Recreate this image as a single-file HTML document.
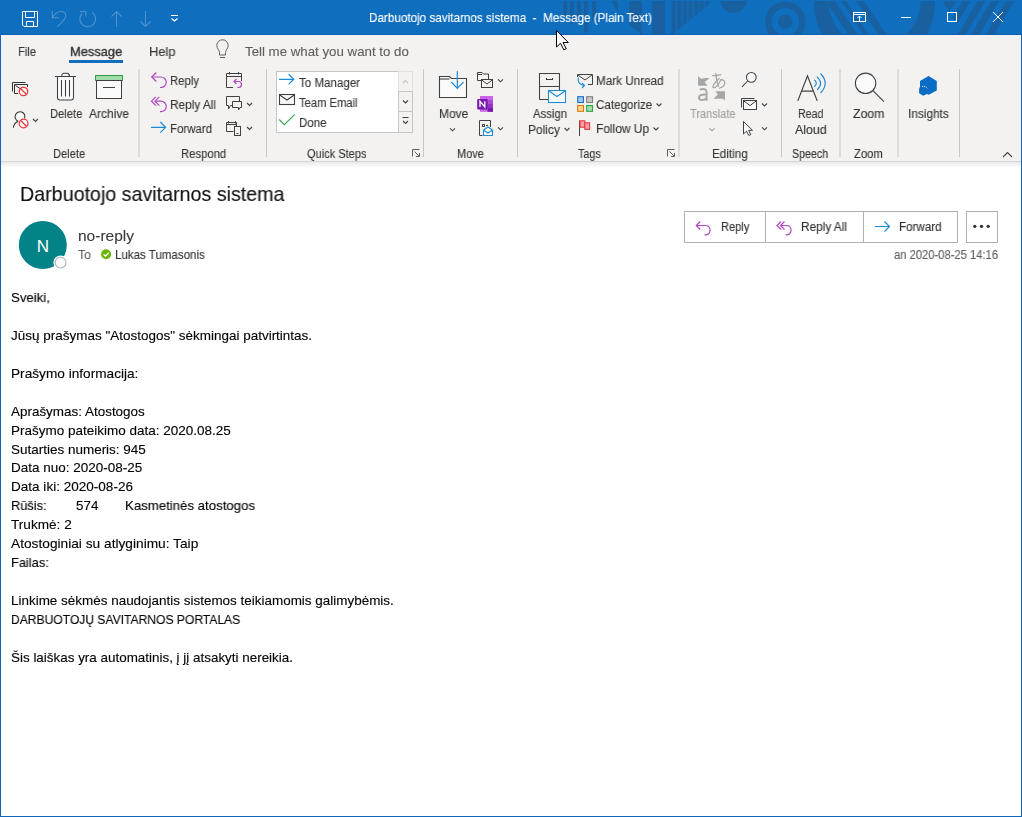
<!DOCTYPE html>
<html><head><meta charset="utf-8"><style>
html,body{margin:0;padding:0;}
body{width:1022px;height:817px;position:relative;overflow:hidden;background:#fff;font-family:"Liberation Sans",sans-serif;}
.t{position:absolute;white-space:pre;line-height:1;transform-origin:0 0;will-change:transform;-webkit-text-stroke:0.12px currentColor;}
#title{position:absolute;left:0;top:0;width:1022px;height:35px;background:#106ebe;}
#ribbon{position:absolute;left:0;top:35px;width:1022px;height:126px;background:#f3f2f1;border-bottom:1px solid #d6d4d2;}
#shadow{position:absolute;left:1px;top:162px;width:1020px;height:6px;background:linear-gradient(#ebeaea,#fff);}
#bl{position:absolute;left:0;top:35px;width:1px;height:782px;background:#0f66bb;}
#br{position:absolute;left:1021px;top:35px;width:1px;height:782px;background:#0f66bb;}
#bb{position:absolute;left:0;top:816px;width:1022px;height:1px;background:#0f66bb;}
</style></head><body>
<div id="title"></div>
<div id="ribbon"></div>
<div id="shadow"></div>
<svg style="position:absolute;left:0;top:0" width="1022" height="817" viewBox="0 0 1022 817">
<defs>
<clipPath id="tb"><rect x="0" y="1" width="1022" height="33"/></clipPath>
<clipPath id="bigc"><circle cx="874.5" cy="0.9" r="46.2"/></clipPath>
<clipPath id="rs"><polygon points="940,1 1022,1 1022,34 955,34 958,24 944,4"/></clipPath>
<clipPath id="tri"><polygon points="671,1 713,1 672,35 671,35"/></clipPath>
<pattern id="vs" width="5.6" height="40" patternUnits="userSpaceOnUse" x="671.5" y="0"><rect x="0" y="0" width="4.4" height="40" fill="#1860a0"/></pattern>
</defs>
<!-- title pattern -->
<g clip-path="url(#tb)" fill="#1860a0">
 <rect x="563" y="1" width="4" height="15.5"/>
 <rect x="570" y="1" width="4" height="22.5"/>
 <rect x="577" y="1" width="4" height="17.5"/>
 <rect x="584" y="1" width="4" height="31.5"/>
 <rect x="592" y="1" width="4" height="19"/>
 <polygon points="611.5,1 618,1 618,12.3"/>
 <polygon points="629,1 642,1 642,34 629,25"/>
 <rect x="652" y="1" width="13" height="33"/>
 <g clip-path="url(#tri)"><rect x="671" y="0" width="45" height="36" fill="url(#vs)"/></g>
 <circle cx="733.5" cy="-0.5" r="13.5"/>
 <path d="M785.3,21.7 m-20.3,0 a20.3,20.3 0 1,0 40.6,0 a20.3,20.3 0 1,0 -40.6,0 Z M785.3,21.7 m-13.7,0 a13.7,13.7 0 1,1 27.4,0 a13.7,13.7 0 1,1 -27.4,0 Z" fill-rule="evenodd"/>
 <circle cx="785.3" cy="21.7" r="7.3"/>
 <path d="M814,3.5 a60.5,60.5 0 1,0 121,0 a60.5,60.5 0 1,0 -121,0 Z M828.3,0.9 a46.2,46.2 0 1,1 92.4,0 a46.2,46.2 0 1,1 -92.4,0 Z" fill-rule="evenodd"/>
 <g clip-path="url(#bigc)">
   <polygon points="826,1 835,1 859,37 850,37"/>
   <polygon points="841.4,1 846,1 870,37 865.4,37"/>
   <polygon points="856,1 864,1 888,37 880,37"/>
 </g>
 <g clip-path="url(#rs)">
  <polygon points="945,1 956,1 932,41 921,41"/>
  <polygon points="962.5,1 970.5,1 947,41 939,41"/>
  <polygon points="977.5,1 985.5,1 962,41 954,41"/>
  <polygon points="991,1 999,1 975.5,41 967.5,41"/>
  <polygon points="1006,1 1014,1 990.5,41 982.5,41"/>
 </g>
</g>
<rect x="0" y="34" width="1022" height="1" fill="#0c5fb0"/>
<!-- quick access -->
<g fill="none" stroke="#fff" stroke-width="1">
 <path d="M22.5,11.5 H37.5 V26.5 H24 L22.5,25 Z"/>
 <path d="M25.5,11.5 V17.5 H34.5 V11.5"/>
 <path d="M26.5,26.5 V21.5 H33.5 V26.5"/>
</g>
<g fill="none" stroke="rgba(255,255,255,0.25)" stroke-width="1.1">
 <path d="M52.5,17.5 C55,13.5 58,11.5 61,11.5 C64,11.5 65.8,13.5 65.8,16 C65.8,18.5 63,21.5 57.3,26.7"/>
 <path d="M52.3,11 V17.8 H59"/>
 <path d="M82,13.5 A7.9,7.9 0 1 0 92.3,12.5"/>
 <path d="M80,11.5 H85.8 V16.8"/>
 <path d="M116.5,11 V27 M111.5,16.5 L116.5,11.5 L121.5,16.5"/>
 <path d="M145.5,11 V27 M140.5,21.5 L145.5,26.5 L150.5,21.5"/>
</g>
<g fill="none" stroke="#fff" stroke-width="1">
 <path d="M171,15.5 H178"/>
 <path d="M171.5,18.5 L174.5,21 L177.5,18.5" stroke-width="1.3"/>
</g>
<!-- window controls -->
<g fill="none" stroke="#fff" stroke-width="1">
 <rect x="853.5" y="12.5" width="12" height="9"/>
 <path d="M853.5,14.5 H865.5 M859.5,16 V21.5 M857.5,18 L859.5,16 L861.5,18"/>
 <path d="M901,17.5 H911"/>
 <rect x="947.5" y="12.5" width="9" height="9"/>
 <path d="M993,12 L1003,22 M1003,12 L993,22"/>
</g>

<!-- ribbon tab underline -->
<rect x="69" y="60" width="54" height="3" fill="#106ebe"/>
<!-- lightbulb -->
<g fill="none" stroke="#605e5c" stroke-width="1">
 <path d="M219.5,55 V52.5 C219.5,50 216.8,48.5 216.8,45.5 A5.7,5.7 0 0 1 228.2,45.5 C228.2,48.5 225.5,50 225.5,52.5 V55 Z"/>
 <path d="M220,57.5 H225"/>
</g>
<!-- separators -->
<g fill="#c8c6c4">
 <rect x="138.5" y="69" width="1" height="88"/>
 <rect x="266" y="69" width="1" height="88"/>
 <rect x="423" y="69" width="1" height="88"/>
 <rect x="517" y="69" width="1" height="88"/>
 <rect x="678.5" y="69" width="1" height="88"/>
 <rect x="781" y="69" width="1" height="88"/>
 <rect x="839.5" y="69" width="1" height="88"/>
 <rect x="897.5" y="69" width="1" height="88"/>
 <rect x="959" y="69" width="1" height="88"/>
</g>
<!-- chevrons -->
<g fill="none" stroke="#444" stroke-width="1.1">
 <path d="M33,119 L35.5,121.5 L38,119"/>
 <path d="M247,103 L249.5,105.5 L252,103"/>
 <path d="M247,127 L249.5,129.5 L252,127"/>
 <path d="M450,128.3 L452.5,130.8 L455,128.3"/>
 <path d="M498,79.3 L500.5,81.8 L503,79.3"/>
 <path d="M498,127.3 L500.5,129.8 L503,127.3"/>
 <path d="M564.5,128 L567,130.5 L569.5,128"/>
 <path d="M656.5,103.5 L659,106 L661.5,103.5"/>
 <path d="M653.5,127.5 L656,130 L658.5,127.5"/>
 <path d="M762,103.5 L764.5,106 L767,103.5"/>
 <path d="M762,127.3 L764.5,129.8 L767,127.3"/>
 <path d="M1003,157 L1007.5,152.5 L1012,157"/>
</g>
<path d="M709.5,128.3 L712,130.8 L714.5,128.3" fill="none" stroke="#a19f9d" stroke-width="1.1"/>
<!-- Ignore icon -->
<g fill="none" stroke="#323130" stroke-width="1">
 <path d="M12.5,91.5 V82.5 H25.5"/>
 <path d="M18,93.5 H14.5 V84.5 H27.5 V87"/>
 <path d="M15.5,85.5 L20,88.5"/>
</g>
<g>
 <circle cx="23.5" cy="91.5" r="4.2" fill="#fff" stroke="#e8383d" stroke-width="1.3"/>
 <path d="M20.7,88.7 L26.3,94.3" stroke="#e8383d" stroke-width="1.3"/>
</g>
<!-- Junk icon -->
<g fill="none" stroke="#323130" stroke-width="1.05">
 <path d="M18.2,121.2 A4.9,4.9 0 1 1 24.6,118.3" fill="#fafafa"/>
 <path d="M13.3,127.6 C13.8,124.5 15.5,122.3 18.2,121.2"/>
</g>
<g>
 <circle cx="23.6" cy="123.5" r="4.4" fill="#fff" stroke="#e8383d" stroke-width="1.25"/>
 <path d="M20.6,120.5 L26.6,126.5" stroke="#e8383d" stroke-width="1.25"/>
</g>
<!-- Trash -->
<g fill="none" stroke="#404040" stroke-width="1.05">
 <path d="M57.5,76.5 V97.5 A2.5,2.5 0 0 0 60,100 H71 A2.5,2.5 0 0 0 73.5,97.5 V76.5" fill="#fafafa"/>
 <path d="M55,76.5 H76"/>
 <path d="M61.8,76.5 C61.8,73.5 62.5,73.3 64,73.3 H67 C68.5,73.3 69.5,73.5 69.5,76.5"/>
 <path d="M61.5,80 V96.5 M65.5,80 V96.5 M69.5,80 V96.5"/>
</g>
<!-- Archive -->
<rect x="95.5" y="75.5" width="27" height="5" fill="#a3dba8" stroke="#2e9e48" stroke-width="1"/>
<rect x="96.5" y="80.5" width="25" height="18" fill="#fafafa" stroke="#404040" stroke-width="1"/>
<path d="M103,87.5 H115" stroke="#404040" stroke-width="1"/>
<!-- Reply / reply all / forward -->
<g fill="none" stroke="#b146c2" stroke-width="1.2">
 <path d="M151.5,77 H161 A5.2,5.2 0 0 1 161,87.5 H160"/>
 <path d="M156.3,72.5 L151.8,77 L156.3,81.5"/>
 <path d="M155.5,101.2 H161 A5.2,5.2 0 0 1 161,111.7 H160"/>
 <path d="M155.8,96.8 L151.5,101.2 L155.8,105.6"/>
 <path d="M159.3,96.8 L155,101.2 L159.3,105.6"/>
</g>
<g fill="none" stroke="#1e8bd6" stroke-width="1.2">
 <path d="M151,127.3 H165.5 M160.3,122 L165.6,127.3 L160.3,132.6"/>
</g>
<!-- meeting reply -->
<g fill="none" stroke="#404040" stroke-width="1">
 <path d="M233,87.5 H226.5 V73.5 H241.5 V81"/>
 <path d="M226.5,76.5 H241.5"/>
 <path d="M229.5,72 V74.5 M238.5,72 V74.5"/>
</g>
<g fill="none" stroke="#b146c2" stroke-width="1.2">
 <path d="M234,81.5 H238.5 A3,3 0 0 1 238.5,87.5 H237.5"/>
 <path d="M236.5,79 L234,81.5 L236.5,84"/>
</g>
<!-- IM -->
<g fill="none" stroke="#404040" stroke-width="1">
 <path d="M232.5,105.5 H230.5 L228.5,109 V105.5 H226.5 V96.5 H239.5 V101"/>
 <path d="M232.5,101.5 H241.5 V107.5 H240 L238.5,110 V107.5 H232.5 Z" fill="#f3f2f1"/>
</g>
<!-- calendar + phone -->
<g fill="none" stroke="#404040" stroke-width="1">
 <path d="M233.5,131.5 H226.5 V122.5 H236.5 V126"/>
 <path d="M226.5,124.5 H236.5"/>
 <path d="M228.5,121 V123.5 M235.5,121 V123.5"/>
 <rect x="234.5" y="126.5" width="6" height="9" fill="#f3f2f1"/>
 <path d="M236.5,133.5 H238.5"/>
</g>
<!-- Quick steps box -->
<rect x="276.5" y="71.5" width="136" height="61" fill="#fff" stroke="#c8c6c4" stroke-width="1"/>
<rect x="398.5" y="71.5" width="14" height="20" fill="#f3f2f1" stroke="#e1dfdd" stroke-width="1"/>
<rect x="398.5" y="91.5" width="14" height="20" fill="#f3f2f1" stroke="#c8c6c4" stroke-width="1"/>
<rect x="398.5" y="111.5" width="14" height="21" fill="#f3f2f1" stroke="#c8c6c4" stroke-width="1"/>
<path d="M403,83 L405.5,80.5 L408,83" fill="none" stroke="#c8c6c4" stroke-width="1.1"/>
<path d="M403,100.5 L405.5,103 L408,100.5" fill="none" stroke="#404040" stroke-width="1.1"/>
<path d="M402.5,117.5 H408.5 M403,121 L405.5,123.5 L408,121" fill="none" stroke="#404040" stroke-width="1.1"/>
<g fill="none" stroke="#1e8bd6" stroke-width="1.2">
 <path d="M279,79.3 H294 M288.6,74.2 L293.8,79.3 L288.6,84.4"/>
</g>
<g fill="none" stroke="#404040" stroke-width="1.1">
 <rect x="279.5" y="94.5" width="15" height="10" fill="#f8f8f8"/>
 <path d="M279.8,95 L287,100 L294.2,95"/>
</g>
<path d="M279.2,119.5 L284.4,124.7 L294.7,114.3" fill="none" stroke="#3aa851" stroke-width="1.2"/>
<!-- launchers -->
<g fill="none" stroke="#605e5c" stroke-width="1">
 <path d="M412.5,156.5 V149.5 H419.5 M414.5,151.5 L419,156 M419.5,153 V156.5 H416"/>
 <path d="M667.5,156.5 V149.5 H674.5 M669.5,151.5 L674,156 M674.5,153 V156.5 H671"/>
</g>
<!-- Move folder -->
<g fill="none" stroke="#404040" stroke-width="1.1">
 <path d="M439.5,97.5 V76.5 H449.5 L451.5,78.5 H466.5 V97.5 Z" fill="#fafafa"/>
 <path d="M439.5,79 H449.5"/>
</g>
<g fill="none" stroke="#1e8bd6" stroke-width="1.2">
 <path d="M457.3,71 V88.5 M451.3,82 L457.3,88.3 L463.5,82"/>
</g>
<!-- rules -->
<g fill="none" stroke="#404040" stroke-width="1">
 <path d="M481,80.5 H477.5 V72.5 H482 L483.5,74 H488.5 V79"/>
 <path d="M477.5,74.5 H482"/>
 <rect x="481.5" y="79.5" width="11" height="8" fill="#f3f2f1"/>
 <path d="M481.8,80 L487,84 L492.2,80"/>
</g>
<!-- OneNote -->
<rect x="480" y="96" width="13" height="15.8" fill="#ca64ea"/>
<rect x="487.5" y="100" width="5.5" height="4" fill="#ae4bd5"/>
<rect x="487.5" y="104" width="5.5" height="4" fill="#9332bf"/>
<rect x="487.5" y="108" width="5.5" height="3.8" fill="#7719aa"/>
<rect x="477.2" y="99" width="10.5" height="10.4" rx="1" fill="#7719aa"/>
<path d="M480,107 V101.3 L484.8,107 V101.3" fill="none" stroke="#fff" stroke-width="1.3"/>
<!-- actions -->
<g fill="none" stroke="#404040" stroke-width="1">
 <path d="M482.5,135.5 H479.5 V120.5 H490.5 V127"/>
 <rect x="482.5" y="124.5" width="2" height="2"/>
 <path d="M486,125.5 H488"/>
</g>
<g fill="none" stroke="#1e8bd6" stroke-width="1.1">
 <path d="M483.5,130 L488,127 L492.5,130 V135.5 H483.5 Z" fill="#fafafa"/>
 <path d="M483.8,130.3 L488,133 L492.2,130.3"/>
</g>
<!-- assign policy -->
<g fill="none" stroke="#404040" stroke-width="1.05">
 <path d="M539.5,99.5 V73.5 H559.5 V90"/>
 <path d="M539.5,86.5 H559.5"/>
 <path d="M546.5,78 V79.5 H552.5 V78"/>
 <path d="M539.5,99.5 H548"/>
</g>
<g fill="none" stroke="#1e8bd6" stroke-width="1.1">
 <rect x="548.5" y="90.5" width="17" height="12" fill="#fafafa"/>
 <path d="M549,91 L557,96.5 L565,91"/>
</g>
<!-- mark unread -->
<g fill="none" stroke="#404040" stroke-width="1">
 <path d="M577.5,77 V74.5 H592.5 V84.5 H588"/>
 <path d="M578,75 L585,80 L592,75"/>
</g>
<g fill="none" stroke="#1e8bd6" stroke-width="1.1">
 <path d="M578.5,77.5 C577,81 579.5,85 584,85.5"/>
 <path d="M582,83 L584.5,85.5 L582,88"/>
</g>
<!-- categorize -->
<rect x="577.7" y="96.7" width="5.8" height="5.8" fill="#9fc9ee" stroke="#1f6fc4" stroke-width="1.1"/>
<rect x="586.7" y="96.7" width="5.8" height="5.8" fill="#c8c8c8" stroke="#808080" stroke-width="1.1"/>
<rect x="577.7" y="105.5" width="5.8" height="5.8" fill="#f9d98a" stroke="#e3730c" stroke-width="1.1"/>
<rect x="586.7" y="105.5" width="5.8" height="5.8" fill="#9fe0a5" stroke="#2e9e48" stroke-width="1.1"/>
<!-- follow up -->
<path d="M579.5,120.5 V136" stroke="#404040" stroke-width="1"/>
<rect x="580" y="120.8" width="4.8" height="6.4" fill="#f7a0a5" stroke="#e8383d" stroke-width="1.1"/>
<rect x="584.8" y="122.8" width="4.8" height="6.6" fill="#f7a0a5" stroke="#e8383d" stroke-width="1.1"/>
<!-- translate (disabled) -->
<g fill="#a6a6a6">
 <path d="M698.1,76.2 L701.2,78.7 Q705,77.8 709.6,78.3 L704.6,82.1 L707.5,85.8 H698.1 Z"/>
 <path d="M725,100.8 L723.3,98.7 Q718,99 713.3,98.7 L717.9,94.6 L715.4,91.2 H725 Z"/>
</g>
<g fill="none" stroke="#a6a6a6" stroke-width="1.9">
 <path d="M699.8,89.6 Q702.5,88.8 704.3,89.2 Q706.6,89.8 706.6,92.5 V100.8"/>
 <path d="M706.6,94.6 Q703.5,94.2 701,95 Q698.8,95.9 698.9,97.8 Q699,100 701.8,100 Q704.8,100 706.6,97.8"/>
</g>
<g fill="none" stroke="#a6a6a6" stroke-width="1.25" stroke-linecap="round">
 <path d="M712.5,75.6 Q717,75.8 720.8,74.7"/>
 <path d="M715.8,73.4 Q716.2,80.5 718.4,86.4"/>
 <path d="M719.2,78.4 Q713.8,83 712.9,86.3 Q712.8,88.3 715,87.4 Q718.8,85 720.8,79.6 Q724.8,79.5 724.8,83 Q724.7,86.6 719.5,88.2"/>
</g>
<!-- find -->
<g fill="none" stroke="#404040" stroke-width="1.05">
 <circle cx="751.3" cy="77.3" r="4.9" fill="#fafafa"/>
 <path d="M747.6,81 L742,86.8"/>
</g>
<!-- related -->
<g fill="none" stroke="#404040" stroke-width="1">
 <path d="M741.5,107.5 V98.5 H754.5"/>
 <rect x="743.5" y="100.5" width="13" height="9" fill="#fafafa"/>
 <path d="M743.8,101 L750,105.5 L756.2,101"/>
</g>
<!-- select -->
<path d="M743.5,121.5 V134 L746.5,131.2 L748.8,135.5 L750.8,134.5 L748.6,130.3 L752.5,130.3 Z" fill="#fafafa" stroke="#404040" stroke-width="1"/>
<!-- read aloud -->
<g fill="none" stroke="#404040" stroke-width="1.2">
 <path d="M797.8,100.9 L807.5,75.8 L817.2,100.9 M801.2,91.2 H813.8"/>
</g>
<g fill="none" stroke="#1e8bd6" stroke-width="1.15">
 <path d="M814.3,79.7 Q818.3,83.3 814.3,86.9"/>
 <path d="M816.8,76.6 Q824.2,83.2 817.2,89.9"/>
 <path d="M820.5,73.5 Q829.9,83.2 820.5,93"/>
</g>
<!-- zoom -->
<g fill="none" stroke="#404040" stroke-width="1.1">
 <circle cx="865.6" cy="83.3" r="10.2" fill="#fafafa"/>
 <path d="M873,90.6 L883.9,101.6"/>
</g>
<!-- insights -->
<polygon points="928.6,76.1 936.8,80.9 936.8,90.5 928.7,94.8 927,94 923.2,95.8 919.1,93.2 919.1,89.1 920,86.7 920,80.9" fill="#0b6cc5"/>
<path d="M922,86.6 C924,85.8 926,86.5 927.7,88.6" fill="none" stroke="#fff" stroke-width="0.8" stroke-dasharray="1.2,0.8"/>
<!-- header -->
<circle cx="42.8" cy="245" r="24" fill="#038387"/>
<text x="42.8" y="251.7" text-anchor="middle" font-family="Liberation Sans" font-size="17" fill="#fff">N</text>
<circle cx="60.6" cy="262.6" r="7.2" fill="#fff"/>
<circle cx="60.6" cy="262.6" r="5.4" fill="#fff" stroke="#a6b3bd" stroke-width="1.1"/>
<circle cx="106.1" cy="254.3" r="5" fill="#6bb700"/>
<path d="M103.6,254.4 L105.4,256.2 L108.7,252.7" fill="none" stroke="#fff" stroke-width="1.3"/>
<!-- header buttons -->
<rect x="684.5" y="211.5" width="273" height="31" fill="#fff" stroke="#b3b0ad" stroke-width="1"/>
<path d="M765.5,212 V242 M863.5,212 V242" stroke="#b3b0ad" stroke-width="1"/>
<rect x="966.5" y="211.5" width="31" height="31" fill="#fff" stroke="#b3b0ad" stroke-width="1"/>
<g fill="#323130"><circle cx="974.8" cy="226.3" r="1.65"/><circle cx="981.5" cy="226.3" r="1.65"/><circle cx="988.2" cy="226.3" r="1.65"/></g>
<g fill="none" stroke="#b146c2" stroke-width="1.2">
 <path d="M696.5,225.5 H706 A4.7,4.7 0 0 1 706,234.8 H704.5"/>
 <path d="M700.3,221.5 L696.3,225.5 L700.3,229.5"/>
 <path d="M781,225.5 H787 A4.7,4.7 0 0 1 787,234.8 H785.5"/>
 <path d="M781,221.5 L777,225.5 L781,229.5"/>
 <path d="M784.5,221.5 L780.5,225.5 L784.5,229.5"/>
</g>
<path d="M875,226.5 H889.5 M884.5,221.5 L889.5,226.5 L884.5,231.5" fill="none" stroke="#1e8bd6" stroke-width="1.2"/>
<!-- mouse cursor -->
<path d="M556.5,30.5 V47 L560.5,43.3 L563.8,49.8 L566.2,48.7 L563,42.5 L568.3,42.5 Z" fill="#fff" stroke="#000" stroke-width="1"/>
</svg>

<span class='t' style='left:369.00px;top:11.00px;font-size:13px;color:#fff;transform:scaleX(0.8990);'>Darbuotojo savitarnos sistema&nbsp; -&nbsp; Message (Plain Text)</span>
<span class='t' style='left:18.00px;top:44.80px;font-size:13.2px;color:#363636;transform:scaleX(0.8471);'>File</span>
<span class='t' style='left:69.50px;top:44.80px;font-size:13.2px;color:#363636;-webkit-text-stroke:0.38px currentColor;transform:scaleX(0.9754);'>Message</span>
<span class='t' style='left:149.00px;top:44.80px;font-size:13.2px;color:#363636;transform:scaleX(0.9770);'>Help</span>
<span class='t' style='left:244.60px;top:44.50px;font-size:13.2px;color:#605e5c;transform:scaleX(1.0065);'>Tell me what you want to do</span>
<span class='t' style='left:49.60px;top:108.01px;font-size:12.5px;color:#363636;transform:scaleX(0.8965);'>Delete</span>
<span class='t' style='left:89.00px;top:108.01px;font-size:12.5px;color:#363636;transform:scaleX(0.9595);'>Archive</span>
<span class='t' style='left:53.40px;top:147.51px;font-size:12.5px;color:#363636;transform:scaleX(0.8910);'>Delete</span>
<span class='t' style='left:170.00px;top:75.30px;font-size:12.5px;color:#363636;transform:scaleX(0.9071);'>Reply</span>
<span class='t' style='left:170.00px;top:98.80px;font-size:12.5px;color:#363636;transform:scaleX(0.9457);'>Reply All</span>
<span class='t' style='left:170.00px;top:122.71px;font-size:12.5px;color:#363636;transform:scaleX(0.9162);'>Forward</span>
<span class='t' style='left:180.50px;top:147.51px;font-size:12.5px;color:#363636;transform:scaleX(0.9032);'>Respond</span>
<span class='t' style='left:299.00px;top:77.01px;font-size:12.5px;color:#363636;transform:scaleX(0.9255);'>To Manager</span>
<span class='t' style='left:299.00px;top:97.01px;font-size:12.5px;color:#363636;transform:scaleX(0.8959);'>Team Email</span>
<span class='t' style='left:299.00px;top:117.21px;font-size:12.5px;color:#363636;transform:scaleX(0.9200);'>Done</span>
<span class='t' style='left:307.00px;top:147.51px;font-size:12.5px;color:#363636;transform:scaleX(0.8814);'>Quick Steps</span>
<span class='t' style='left:438.60px;top:108.01px;font-size:12.5px;color:#363636;transform:scaleX(0.9615);'>Move</span>
<span class='t' style='left:456.60px;top:147.51px;font-size:12.5px;color:#363636;transform:scaleX(0.8797);'>Move</span>
<span class='t' style='left:532.50px;top:108.01px;font-size:12.5px;color:#363636;transform:scaleX(0.9086);'>Assign</span>
<span class='t' style='left:528.00px;top:124.01px;font-size:12.5px;color:#363636;transform:scaleX(0.9597);'>Policy</span>
<span class='t' style='left:595.50px;top:75.01px;font-size:12.5px;color:#363636;transform:scaleX(0.9356);'>Mark Unread</span>
<span class='t' style='left:595.50px;top:98.80px;font-size:12.5px;color:#363636;transform:scaleX(0.9296);'>Categorize</span>
<span class='t' style='left:595.50px;top:123.21px;font-size:12.5px;color:#363636;transform:scaleX(0.9572);'>Follow Up</span>
<span class='t' style='left:578.00px;top:147.51px;font-size:12.5px;color:#363636;transform:scaleX(0.8596);'>Tags</span>
<span class='t' style='left:689.60px;top:108.01px;font-size:12.5px;color:#a19f9d;transform:scaleX(0.8789);'>Translate</span>
<span class='t' style='left:711.60px;top:147.51px;font-size:12.5px;color:#363636;transform:scaleX(0.9363);'>Editing</span>
<span class='t' style='left:798.00px;top:108.01px;font-size:12.5px;color:#363636;transform:scaleX(0.8498);'>Read</span>
<span class='t' style='left:795.00px;top:124.01px;font-size:12.5px;color:#363636;transform:scaleX(0.9911);'>Aloud</span>
<span class='t' style='left:792.30px;top:147.51px;font-size:12.5px;color:#363636;transform:scaleX(0.8513);'>Speech</span>
<span class='t' style='left:853.00px;top:108.01px;font-size:12.5px;color:#363636;transform:scaleX(0.9827);'>Zoom</span>
<span class='t' style='left:853.80px;top:147.51px;font-size:12.5px;color:#363636;transform:scaleX(0.9013);'>Zoom</span>
<span class='t' style='left:908.00px;top:108.01px;font-size:12.5px;color:#363636;transform:scaleX(0.9468);'>Insights</span>
<span class='t' style='left:20.00px;top:185.20px;font-size:19.8px;color:#111;transform:scaleX(0.9941);'>Darbuotojo savitarnos sistema</span>
<span class='t' style='left:77.80px;top:227.90px;font-size:15.4px;color:#3b3a39;transform:scaleX(1.0070);'>no-reply</span>
<span class='t' style='left:78.30px;top:248.71px;font-size:12.4px;color:#605e5c;transform:scaleX(0.9776);'>To</span>
<span class='t' style='left:115.20px;top:248.71px;font-size:12.4px;color:#323130;transform:scaleX(0.9313);'>Lukas Tumasonis</span>
<span class='t' style='left:720.50px;top:221.01px;font-size:12px;color:#323130;transform:scaleX(0.9222);'>Reply</span>
<span class='t' style='left:801.00px;top:221.01px;font-size:12px;color:#323130;transform:scaleX(0.9853);'>Reply All</span>
<span class='t' style='left:899.00px;top:221.01px;font-size:12px;color:#323130;transform:scaleX(0.9678);'>Forward</span>
<span class='t' style='left:894.30px;top:249.21px;font-size:12.2px;color:#605e5c;transform:scaleX(0.9190);'>an 2020-08-25 14:16</span>
<span class='t' style='left:11.00px;top:290.91px;font-size:13.39px;color:#000;transform:scaleX(0.9868);'>Sveiki,</span>
<span class='t' style='left:11.00px;top:328.80px;font-size:13.39px;color:#000;transform:scaleX(1.0081);'>Jūsų prašymas &quot;Atostogos&quot; sėkmingai patvirtintas.</span>
<span class='t' style='left:11.00px;top:366.71px;font-size:13.39px;color:#000;transform:scaleX(1.0203);'>Prašymo informacija:</span>
<span class='t' style='left:11.00px;top:404.60px;font-size:13.39px;color:#000;transform:scaleX(1.0053);'>Aprašymas: Atostogos</span>
<span class='t' style='left:11.00px;top:423.55px;font-size:13.39px;color:#000;transform:scaleX(1.0092);'>Prašymo pateikimo data: 2020.08.25</span>
<span class='t' style='left:11.00px;top:442.51px;font-size:13.39px;color:#000;transform:scaleX(1.0075);'>Sutarties numeris: 945</span>
<span class='t' style='left:11.00px;top:461.46px;font-size:13.39px;color:#000;transform:scaleX(1.0078);'>Data nuo: 2020-08-25</span>
<span class='t' style='left:11.00px;top:480.41px;font-size:13.39px;color:#000;transform:scaleX(1.0126);'>Data iki: 2020-08-26</span>
<span class='t' style='left:11.00px;top:499.35px;font-size:13.39px;color:#000;transform:scaleX(0.9577);'>Rūšis:</span>
<span class='t' style='left:75.70px;top:499.35px;font-size:13.39px;color:#000;'>574</span>
<span class='t' style='left:125.00px;top:499.35px;font-size:13.39px;color:#000;transform:scaleX(0.9878);'>Kasmetinės atostogos</span>
<span class='t' style='left:11.00px;top:518.30px;font-size:13.39px;color:#000;transform:scaleX(1.0169);'>Trukmė: 2</span>
<span class='t' style='left:11.00px;top:537.26px;font-size:13.39px;color:#000;transform:scaleX(1.0253);'>Atostoginiai su atlyginimu: Taip</span>
<span class='t' style='left:11.00px;top:556.21px;font-size:13.39px;color:#000;transform:scaleX(0.9605);'>Failas:</span>
<span class='t' style='left:11.00px;top:594.10px;font-size:13.39px;color:#000;transform:scaleX(1.0058);'>Linkime sėkmės naudojantis sistemos teikiamomis galimybėmis.</span>
<span class='t' style='left:11.00px;top:613.05px;font-size:13.39px;color:#000;transform:scaleX(0.9036);'>DARBUOTOJŲ SAVITARNOS PORTALAS</span>
<span class='t' style='left:11.00px;top:650.96px;font-size:13.39px;color:#000;transform:scaleX(1.0036);'>Šis laiškas yra automatinis, į jį atsakyti nereikia.</span>

<div id="bl"></div><div id="br"></div><div id="bb"></div>
</body></html>
